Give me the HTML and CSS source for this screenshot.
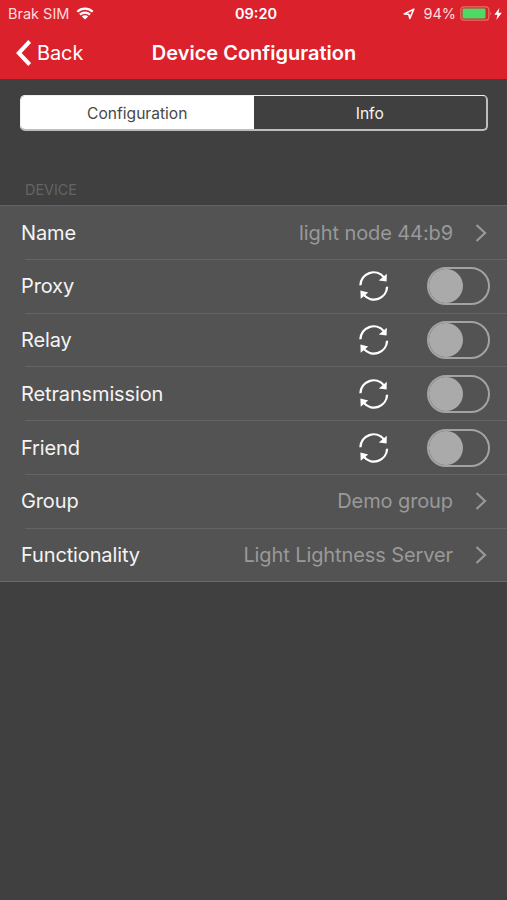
FILE: index.html
```html
<!DOCTYPE html>
<html lang="en">
  <head>
    <meta charset="UTF-8" />
    <meta name="viewport" content="width=device-width, initial-scale=1.0" />
    <title>Device Configuration</title>
    <link rel="stylesheet" href="styles.css">
  </head>
  <body>
    <svg class="symbols" aria-hidden="true">
      <symbol id="icon-chevron" viewBox="0 0 12 20">
        <path d="M1.5 2L10 10L1.5 18" fill="none" stroke="currentColor" stroke-width="2.2" />
      </symbol>
      <symbol id="icon-refresh" viewBox="0 0 30 30">
        <path d="M1.4 14.2A13.2 13.2 0 0 1 24.8 6.2M28.1 15.8A13.2 13.2 0 0 1 4.8 23.8" fill="none" stroke="currentColor" stroke-width="2.3" />
        <path d="M27.8 2.8L27.6 10.6L19.8 9.6ZM1.4 19.4L9.2 21.4L1.7 27.8Z" fill="currentColor" />
      </symbol>
    </svg>

    <div id="app">
      <header class="header">
        <div class="status-bar">
          <div class="status-left">
            <span class="carrier">Brak SIM</span>
            <svg class="wifi" viewBox="0 0 18 13">
              <path d="M1.3 4.8A11 11 0 0 1 16.7 4.8M4 7.6A7.1 7.1 0 0 1 14 7.6" fill="none" stroke="currentColor" stroke-width="2.3" />
              <path d="M9 12.6L5.8 9.5A4.6 4.6 0 0 1 12.2 9.5Z" fill="currentColor" />
            </svg>
          </div>
          <span class="clock">09:20</span>
          <div class="status-right">
            <svg class="location" viewBox="0 0 12 12">
              <path d="M1.2 5.9L10.8 1.2L6.8 10.4L5.8 6.2Z" fill="none" stroke="currentColor" stroke-width="1.6" stroke-linejoin="round" />
            </svg>
            <span class="percent">94%</span>
            <svg class="battery" viewBox="0 0 32 15">
              <rect x="0.8" y="0.8" width="28" height="13.4" rx="3" fill="none" stroke="#ee6a68" stroke-width="1.2" />
              <rect x="2.5" y="2.5" width="23" height="10" rx="1" fill="#4cd964" />
              <path d="M30.2 5.2Q32.2 7.5 30.2 9.8Z" fill="#ee6a68" />
            </svg>
            <svg class="bolt" viewBox="0 0 8 12">
              <path d="M5.4 0L0.3 6.8H3.4L2.4 12L7.8 4.8H4.5Z" fill="currentColor" />
            </svg>
          </div>
        </div>
        <nav class="nav-bar">
          <a class="back">
            <svg class="back-arrow" viewBox="0 0 15 26">
              <path d="M13.7 1.5L2.8 13L13.7 24.5" fill="none" stroke="currentColor" stroke-width="4" />
            </svg>
            <span>Back</span>
          </a>
          <h1 class="title">Device Configuration</h1>
        </nav>
      </header>

      <main>
        <div class="tabs">
          <div class="tab active">Configuration</div>
          <div class="tab">Info</div>
        </div>

        <h2 class="section-label">DEVICE</h2>
        <ul class="settings">
          <li class="row">
            <span class="label">Name</span>
            <span class="value">light node 44:b9</span>
            <svg class="chevron"><use href="#icon-chevron" /></svg>
          </li>
          <li class="row">
            <span class="label">Proxy</span>
            <svg class="refresh"><use href="#icon-refresh" /></svg>
            <span class="switch"></span>
          </li>
          <li class="row">
            <span class="label">Relay</span>
            <svg class="refresh"><use href="#icon-refresh" /></svg>
            <span class="switch"></span>
          </li>
          <li class="row">
            <span class="label">Retransmission</span>
            <svg class="refresh"><use href="#icon-refresh" /></svg>
            <span class="switch"></span>
          </li>
          <li class="row">
            <span class="label">Friend</span>
            <svg class="refresh"><use href="#icon-refresh" /></svg>
            <span class="switch"></span>
          </li>
          <li class="row">
            <span class="label">Group</span>
            <span class="value">Demo group</span>
            <svg class="chevron"><use href="#icon-chevron" /></svg>
          </li>
          <li class="row">
            <span class="label">Functionality</span>
            <span class="value">Light Lightness Server</span>
            <svg class="chevron"><use href="#icon-chevron" /></svg>
          </li>
        </ul>
      </main>
    </div>
  </body>
</html>
```
FILE: styles.css
```css
body {
  margin: 0;
  background: #404040;
  color: #f4f4f4;
  font-family: Inter, 'Liberation Sans', sans-serif;
}

.symbols {
  display: none;
}

#app {
  height: 100vh;
  overflow: hidden;
}

/* Header */
.header {
  height: 79px;
  background: #db212c;
  color: #fff;
}

.status-bar {
  display: grid;
  grid-template-columns: 1fr auto 1fr;
  align-items: center;
  height: 27px;
  padding: 0 5px 0 8px;
  font-size: 14.5px;
}

.status-left,
.status-right {
  display: flex;
  align-items: center;
}

.status-right {
  justify-content: flex-end;
}

.carrier {
  color: #ffdcdc;
}

.wifi {
  width: 18px;
  height: 13px;
  margin-left: 7px;
}

.clock {
  padding-left: 2px;
  font-weight: 600;
}

.location {
  width: 12px;
  height: 12px;
  margin-right: 8px;
}

.percent {
  color: #ffdcdc;
}

.battery {
  width: 32px;
  height: 15px;
  margin: 0 2px 0 4px;
}

.bolt {
  width: 8px;
  height: 12px;
}

.nav-bar {
  display: grid;
  grid-template-columns: 1fr auto 1fr;
  align-items: center;
  height: 51px;
  padding: 0 15px 0 16px;
}

.back {
  display: flex;
  align-items: center;
  gap: 6px;
  font-size: 20px;
  letter-spacing: -0.1px;
}

.back-arrow {
  width: 15px;
  height: 26px;
}

.title {
  margin: 0;
  font-size: 20px;
  font-weight: 600;
}

/* Tabs */
.tabs {
  display: flex;
  box-sizing: border-box;
  height: 36px;
  margin: 16px 19px 0 20px;
  border: 1px solid #f0f0f0;
  border-right: 2px solid #bdbdbd;
  border-bottom: 2px solid #bdbdbd;
  border-radius: 5px;
  overflow: hidden;
}

.tab {
  flex: 1;
  display: flex;
  align-items: center;
  justify-content: center;
  padding-top: 1px;
  font-size: 15.6px;
}

.tab.active {
  background: #fff;
  color: #484848;
}

/* Settings list */
.section-label {
  margin: 49px 0 0 25px;
  height: 25px;
  line-height: 19px;
  font-size: 14.4px;
  font-weight: 400;
  color: #646464;
}

.settings {
  margin: 0;
  padding: 0;
  list-style: none;
  background: #535353;
  border-bottom: 1px solid #6a6a6a;
}

.row {
  display: flex;
  align-items: center;
  box-sizing: border-box;
  height: 53.75px;
  padding: 1.5px 17px 0 21px;
  background: linear-gradient(#646464, #646464) 25px 0 / 100% 1px no-repeat;
}

.row:first-child {
  background-position: 0 0;
}

.label {
  flex: 1;
  font-size: 20px;
  letter-spacing: -0.13px;
}

.value {
  font-size: 20px;
  letter-spacing: -0.1px;
  color: #999;
}

.chevron {
  width: 12px;
  height: 20px;
  margin: 0 3px 0 22px;
  color: #999;
}

.refresh {
  width: 30px;
  height: 30px;
  margin-right: 38px;
  color: #fff;
}

.switch {
  display: flex;
  box-sizing: border-box;
  width: 63px;
  height: 38px;
  border: 2px solid #a3a3a3;
  border-radius: 19px;
}

.switch::before {
  content: '';
  width: 34px;
  height: 34px;
  border-radius: 50%;
  background: #aaa;
}
```
